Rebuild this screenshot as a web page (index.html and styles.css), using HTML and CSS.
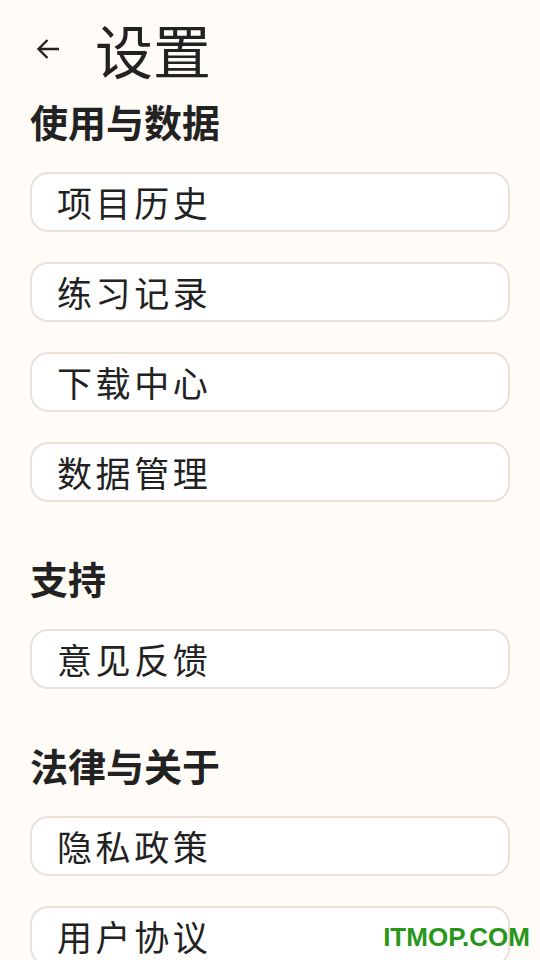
FILE: index.html
```html
<!DOCTYPE html>
<html lang="zh">
<head>
<meta charset="utf-8">
<title>设置</title>
<link rel="stylesheet" href="styles.css">
</head>
<body>
<div class="page">
  <header class="topbar">
    <span class="back">
      <svg viewBox="0 0 24 24" width="24" height="24"><path d="M23 12H2.5M11.5 3L2.5 12l9 9" fill="none" stroke="#222" stroke-width="2.4" stroke-linecap="butt" stroke-linejoin="miter"/></svg>
    </span>
    <h1 class="title">设置</h1>
  </header>

  <section class="section">
    <h2 class="heading">使用与数据</h2>
    <div class="list">
      <div class="item">项目历史</div>
      <div class="item">练习记录</div>
      <div class="item">下载中心</div>
      <div class="item">数据管理</div>
    </div>
  </section>

  <section class="section">
    <h2 class="heading">支持</h2>
    <div class="list">
      <div class="item">意见反馈</div>
    </div>
  </section>

  <section class="section">
    <h2 class="heading">法律与关于</h2>
    <div class="list">
      <div class="item">隐私政策</div>
      <div class="item">用户协议</div>
    </div>
  </section>
</div>
<div class="watermark">ITMOP.COM</div>
</body>
</html>
```

FILE: styles.css
```css
html, body {
  margin: 0;
  padding: 0;
  background: #fffbf6;
  height: 100%;
  overflow: hidden;
}
body {
  font-family: "Noto Sans CJK SC", "Noto Sans", sans-serif;
  color: #222;
}
.page {
  padding: 16px 30px 0 30px;
  display: flex;
  flex-direction: column;
}
.topbar {
  display: flex;
  align-items: center;
  height: 66px;
}
.back {
  display: flex;
  margin-left: 6px;
  width: 24px;
  height: 24px;
}
.title {
  margin: 0 0 0 35px;
  font-size: 58px;
  line-height: 66px;
  font-weight: 400;
  color: #222;
}
.section {
  display: flex;
  flex-direction: column;
  margin-top: 52px;
}
.section:first-of-type {
  margin-top: 15px;
}
.heading {
  margin: 0 0 27px 0;
  font-size: 38px;
  line-height: 48px;
  font-weight: 700;
  color: #222;
}
.list {
  display: flex;
  flex-direction: column;
  gap: 30px;
}
.item {
  box-sizing: border-box;
  height: 60px;
  background: #ffffff;
  border: 2px solid #e8e1dc;
  border-radius: 18px;
  display: flex;
  align-items: center;
  padding-left: 25px;
  padding-bottom: 2px;
  font-size: 35px;
  letter-spacing: 3.6px;
  font-weight: 400;
  color: #222;
}
.watermark {
  position: absolute;
  right: 10px;
  bottom: 8px;
  font-family: "Liberation Sans", Arial, sans-serif;
  font-weight: 700;
  font-size: 26px;
  line-height: 30px;
  color: #27961b;
}
```
